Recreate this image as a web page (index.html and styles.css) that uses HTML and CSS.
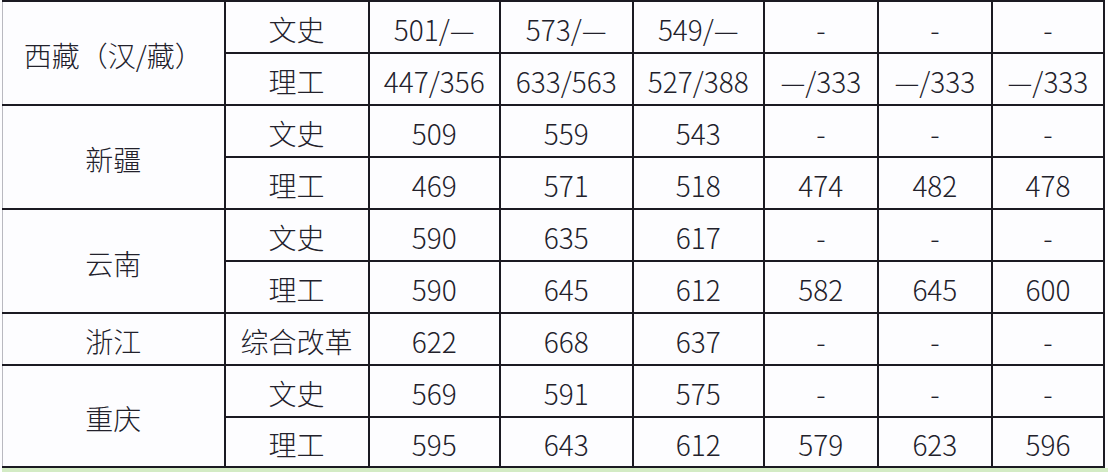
FILE: index.html
```html
<!DOCTYPE html>
<html lang="zh-CN">
<head>
<meta charset="utf-8">
<title>分数线</title>
<link rel="stylesheet" href="styles.css">
</head>
<body>
<div class="sheet">
<table class="scores">
  <colgroup>
    <col class="c-prov"><col class="c-type"><col class="c-n1"><col class="c-n2"><col class="c-n3"><col class="c-n4"><col class="c-n5"><col class="c-n6">
  </colgroup>
  <tbody>
    <tr>
      <td rowspan="2" class="prov">西藏（汉/藏）</td>
      <td>文史</td><td>501/—</td><td>573/—</td><td>549/—</td><td>-</td><td>-</td><td>-</td>
    </tr>
    <tr>
      <td>理工</td><td>447/356</td><td>633/563</td><td>527/388</td><td>—/333</td><td>—/333</td><td>—/333</td>
    </tr>
    <tr>
      <td rowspan="2" class="prov">新疆</td>
      <td>文史</td><td>509</td><td>559</td><td>543</td><td>-</td><td>-</td><td>-</td>
    </tr>
    <tr>
      <td>理工</td><td>469</td><td>571</td><td>518</td><td>474</td><td>482</td><td>478</td>
    </tr>
    <tr>
      <td rowspan="2" class="prov">云南</td>
      <td>文史</td><td>590</td><td>635</td><td>617</td><td>-</td><td>-</td><td>-</td>
    </tr>
    <tr>
      <td>理工</td><td>590</td><td>645</td><td>612</td><td>582</td><td>645</td><td>600</td>
    </tr>
    <tr>
      <td class="prov">浙江</td>
      <td>综合改革</td><td>622</td><td>668</td><td>637</td><td>-</td><td>-</td><td>-</td>
    </tr>
    <tr>
      <td rowspan="2" class="prov">重庆</td>
      <td>文史</td><td>569</td><td>591</td><td>575</td><td>-</td><td>-</td><td>-</td>
    </tr>
    <tr class="last">
      <td>理工</td><td>595</td><td>643</td><td>612</td><td>579</td><td>623</td><td>596</td>
    </tr>
  </tbody>
</table>
<div class="strip"></div>
</div>
</body>
</html>
```

FILE: styles.css
```css
html, body {
  margin: 0;
  padding: 0;
  background: #ffffff;
}

.sheet {
  width: 1108px;
  height: 472px;
  overflow: hidden;
  padding-left: 2px;
  box-sizing: border-box;
  background: #fdfdff;
}

.scores {
  border-collapse: collapse;
  table-layout: fixed;
  width: 1103px;
  font-family: "Noto Sans CJK SC", "Noto Sans", sans-serif;
  font-size: 28px;
  font-weight: 300;
  color: #22212b;
  background: #fdfdff;
}

.c-prov { width: 222px; }
.c-type { width: 144px; }
.c-n1 { width: 131px; }
.c-n2 { width: 133px; }
.c-n3 { width: 131px; }
.c-n4 { width: 114px; }
.c-n5 { width: 114px; }
.c-n6 { width: 112px; }

.scores td {
  border: 2px solid #1b1a22;
  height: 47px;
  padding: 3px 0 0 0;
  text-align: center;
  vertical-align: middle;
  line-height: 1;
  white-space: nowrap;
  overflow: hidden;
}

.scores td.prov {
  border-left: 1px solid #b9b9c0;
}

.scores tr.last td {
  height: 45px;
}

.strip {
  height: 6px;
  background: #d3ebc4;
}
```
